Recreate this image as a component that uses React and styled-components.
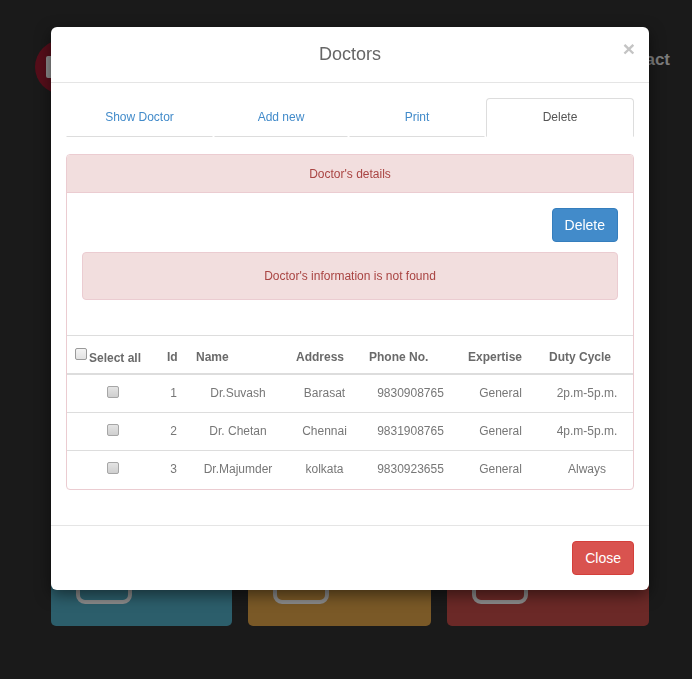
import React from 'react';
import styled, { createGlobalStyle } from 'styled-components';

const GlobalStyle = createGlobalStyle`
  html, body {
    margin: 0;
    padding: 0;
    background: #1a1a1a;
    font-family: "Liberation Sans", Arial, sans-serif;
    font-size: 12px;
    color: #555;
  }
  * { box-sizing: border-box; }
`;

const doctors = [
  { id: 1, name: 'Dr.Suvash', address: 'Barasat', phone: '9830908765', expertise: 'General', duty: '2p.m-5p.m.' },
  { id: 2, name: 'Dr. Chetan', address: 'Chennai', phone: '9831908765', expertise: 'General', duty: '4p.m-5p.m.' },
  { id: 3, name: 'Dr.Majumder', address: 'kolkata', phone: '9830923655', expertise: 'General', duty: 'Always' },
];

const tabs = [
  { label: 'Show Doctor' },
  { label: 'Add new' },
  { label: 'Print' },
  { label: 'Delete', active: true },
];

const cards = [
  { color: '#2c5e6b' },
  { color: '#7a5927' },
  { color: '#6b2927' },
];

const CardIcon = () => (
  <svg width="58" height="44" viewBox="0 0 58 44">
    <rect x="3" y="2" width="52" height="39" rx="7" fill="none" stroke="#8a8a8a" strokeWidth="4" />
  </svg>
);

const App = () => {
  return (
    <>
      <GlobalStyle />
      <Page>
        <TopBar>
          <Logo>
            <LogoMark />
          </Logo>
          <NavLink>Contact</NavLink>
        </TopBar>

        <Cards>
          {cards.map((card, index) => (
            <Card key={index} color={card.color}>
              <CardIcon />
            </Card>
          ))}
        </Cards>
      </Page>

      <Backdrop>
        <Modal>
          <ModalHeader>
            <span />
            <ModalTitle>Doctors</ModalTitle>
            <CloseX>×</CloseX>
          </ModalHeader>

          <ModalBody>
            <Tabs>
              {tabs.map((tab, index) => (
                <Tab key={index} active={tab.active}>
                  {tab.label}
                </Tab>
              ))}
            </Tabs>

            <Panel>
              <PanelHeading>Doctor's details</PanelHeading>
              <PanelBody>
                <Toolbar>
                  <Button variant="primary">Delete</Button>
                </Toolbar>
                <Alert>Doctor's information is not found</Alert>
              </PanelBody>

              <Table>
                <colgroup>
                  <col style={{ width: 92 }} />
                  <col style={{ width: 29 }} />
                  <col style={{ width: 100 }} />
                  <col style={{ width: 73 }} />
                  <col style={{ width: 99 }} />
                  <col style={{ width: 81 }} />
                  <col style={{ width: 92 }} />
                </colgroup>
                <thead>
                  <tr>
                    <Th>
                      <HeadCheck />
                      Select all
                    </Th>
                    <Th>Id</Th>
                    <Th>Name</Th>
                    <Th>Address</Th>
                    <Th>Phone No.</Th>
                    <Th>Expertise</Th>
                    <Th>Duty Cycle</Th>
                  </tr>
                </thead>
                <tbody>
                  {doctors.map((doc) => (
                    <tr key={doc.id}>
                      <Td><RowCheck /></Td>
                      <Td>{doc.id}</Td>
                      <Td>{doc.name}</Td>
                      <Td>{doc.address}</Td>
                      <Td>{doc.phone}</Td>
                      <Td>{doc.expertise}</Td>
                      <Td>{doc.duty}</Td>
                    </tr>
                  ))}
                </tbody>
              </Table>
            </Panel>
          </ModalBody>

          <ModalFooter>
            <Button variant="danger">Close</Button>
          </ModalFooter>
        </Modal>
      </Backdrop>
    </>
  );
};

export default App;

const Page = styled.div`
  height: 679px;
  display: flex;
  flex-direction: column;
  justify-content: space-between;
  padding-bottom: 53px;
`;

const TopBar = styled.div`
  display: flex;
  justify-content: space-between;
  align-items: center;
  padding: 40px 22px 0 35px;
`;

const Logo = styled.div`
  width: 54px;
  height: 54px;
  border-radius: 50%;
  background: #560e1a;
  display: flex;
  align-items: center;
  padding-left: 11px;
`;

const LogoMark = styled.div`
  width: 8px;
  height: 22px;
  border-radius: 2px;
  background: #8c8c8c;
`;

const NavLink = styled.div`
  font-size: 17px;
  font-weight: 700;
  color: #7c7c7c;
  margin-top: -14px;
`;

const Cards = styled.div`
  display: grid;
  grid-template-columns: 181px 183px 202px;
  gap: 16px;
  padding-left: 51px;
`;

const Card = styled.div`
  height: 140px;
  border-radius: 5px;
  background: ${({ color }) => color};
  display: flex;
  align-items: flex-end;
  padding: 0 0 21px 24px;
`;

const Backdrop = styled.div`
  position: fixed;
  inset: 0;
  padding: 27px 0 0 51px;
`;

const Modal = styled.div`
  width: 598px;
  background: #fff;
  border-radius: 6px;
  box-shadow: 0 5px 15px rgba(0, 0, 0, 0.5);
`;

const ModalHeader = styled.div`
  display: grid;
  grid-template-columns: 1fr auto 1fr;
  align-items: center;
  padding: 14px 15px 15px;
  border-bottom: 1px solid #e5e5e5;
`;

const ModalTitle = styled.h4`
  margin: 0;
  font-size: 18px;
  font-weight: 400;
  line-height: 26px;
  color: #666;
`;

const CloseX = styled.span`
  justify-self: end;
  margin-top: -12px;
  margin-right: -1px;
  font-size: 21px;
  font-weight: 700;
  line-height: 1;
  color: #c4c4c4;
`;

const ModalBody = styled.div`
  padding: 15px 15px 35px;
`;

const Tabs = styled.div`
  display: grid;
  grid-template-columns: 147px 134px 136px 148px;
  gap: 1px;
`;

const Tab = styled.div`
  text-align: center;
  padding: 10px 15px;
  line-height: 17px;
  border-radius: 4px 4px 0 0;
  color: ${({ active }) => (active ? '#555' : '#428bca')};
  border: 1px solid ${({ active }) => (active ? '#ddd' : 'transparent')};
  border-bottom: 1px solid ${({ active }) => (active ? 'transparent' : '#ddd')};
  background: #fff;
`;

const Panel = styled.div`
  margin-top: 17px;
  padding-bottom: 1px;
  border: 1px solid #ebccd1;
  border-radius: 4px;
  overflow: hidden;
`;

const PanelHeading = styled.div`
  background: #f2dede;
  color: #a94442;
  text-align: center;
  padding: 11px 15px 9px;
  line-height: 17px;
  border-bottom: 1px solid #ebccd1;
`;

const PanelBody = styled.div`
  padding: 15px;
`;

const Toolbar = styled.div`
  display: flex;
  justify-content: flex-end;
  margin-bottom: 10px;
`;

const Button = styled.button`
  font-family: inherit;
  font-size: 14px;
  line-height: 20px;
  padding: 6px 12px;
  border-radius: 4px;
  color: #fff;
  cursor: pointer;
  background: ${({ variant }) => (variant === 'danger' ? '#d9534f' : '#428bca')};
  border: 1px solid ${({ variant }) => (variant === 'danger' ? '#d43f3a' : '#357ebd')};
`;

const Alert = styled.div`
  background: #f2dede;
  border: 1px solid #ebccd1;
  border-radius: 4px;
  color: #a94442;
  text-align: center;
  padding: 15px;
  line-height: 16px;
  margin-bottom: 20px;
`;

const Table = styled.table`
  width: 100%;
  table-layout: fixed;
  border-collapse: collapse;
  border-top: 1px solid #ddd;
`;

const Th = styled.th`
  text-align: left;
  font-weight: 700;
  color: #6a6a6a;
  padding: 12px 8px 6px;
  line-height: 17px;
  white-space: nowrap;
  border-bottom: 2px solid #ddd;
`;

const Td = styled.td`
  text-align: center;
  color: #777;
  padding: 10px 8px;
  line-height: 17px;
  border-top: 1px solid #ddd;
  white-space: nowrap;
`;

const HeadCheck = styled.span`
  display: inline-block;
  width: 12px;
  height: 12px;
  margin-right: 2px;
  vertical-align: 2px;
  border: 1px solid #9a9a9a;
  border-radius: 2px;
  background: linear-gradient(#f4f4f4, #e2e2e2);
`;

const RowCheck = styled.span`
  display: inline-block;
  width: 12px;
  height: 12px;
  vertical-align: -1px;
  border: 1px solid #a6a6a6;
  border-radius: 2px;
  background: linear-gradient(#e4e4e4, #cfcfcf);
`;

const ModalFooter = styled.div`
  display: flex;
  justify-content: flex-end;
  padding: 15px;
  border-top: 1px solid #e5e5e5;
`;
